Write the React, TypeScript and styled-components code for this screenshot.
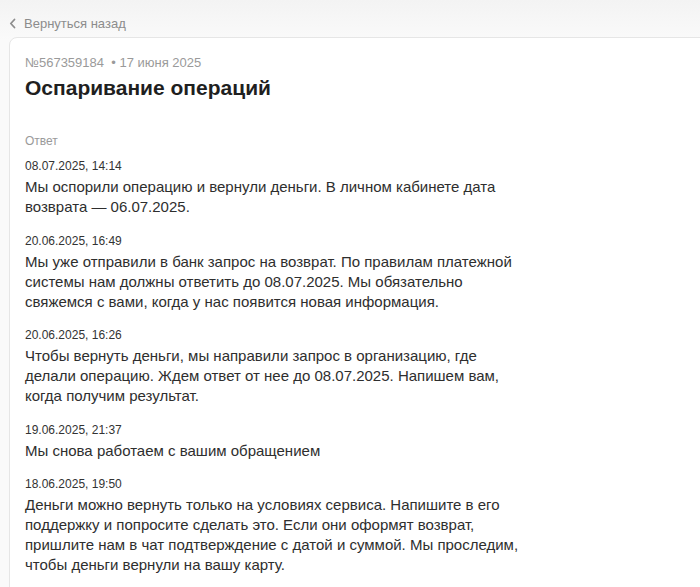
import React from "react";
import styled, { createGlobalStyle } from "styled-components";

const GlobalStyle = createGlobalStyle`
  html, body {
    margin: 0;
    padding: 0;
    background: #fafafa;
    font-family: "Liberation Sans", Arial, sans-serif;
  }
`;

const Page = styled.div`
  min-height: 587px;
  background: linear-gradient(#f3f3f3 0, #fafafa 40px, #fafafa 100%);
  padding: 13px 0 0 9px;
  box-sizing: border-box;
  overflow: hidden;
`;

const BackLink = styled.a`
  display: flex;
  align-items: center;
  gap: 8px;
  height: 20px;
  font-size: 13px;
  color: #8c8c8c;
  text-decoration: none;
  cursor: pointer;
`;

const Card = styled.div`
  margin-top: 4px;
  margin-right: -20px;
  background: #ffffff;
  border: 1px solid #e6e6e6;
  border-radius: 8px;
  padding: 17px 15px 40px;
  min-height: 600px;
`;

const Meta = styled.div`
  font-size: 13px;
  line-height: 16px;
  color: #9a9a9a;
`;

const Title = styled.h1`
  margin: 3px 0 0;
  font-size: 21px;
  line-height: 28px;
  font-weight: 700;
  color: #1f1f1f;
`;

const SectionLabel = styled.div`
  margin-top: 31px;
  font-size: 12px;
  line-height: 16px;
  color: #9a9a9a;
`;

const Messages = styled.div`
  display: flex;
  flex-direction: column;
  gap: 15.5px;
  margin-top: 9px;
  max-width: 500px;
`;

const Message = styled.div`
  display: flex;
  flex-direction: column;
  gap: 2px;
`;

const Stamp = styled.div`
  font-size: 12px;
  line-height: 17px;
  color: #333333;
`;

const Body = styled.div`
  font-size: 15px;
  line-height: 20px;
  color: #2e2e2e;
`;

const messages = [
  {
    at: "08.07.2025, 14:14",
    text: "Мы оспорили операцию и вернули деньги. В личном кабинете дата возврата — 06.07.2025.",
  },
  {
    at: "20.06.2025, 16:49",
    text: "Мы уже отправили в банк запрос на возврат. По правилам платежной системы нам должны ответить до 08.07.2025. Мы обязательно свяжемся с вами, когда у нас появится новая информация.",
  },
  {
    at: "20.06.2025, 16:26",
    text: "Чтобы вернуть деньги, мы направили запрос в организацию, где делали операцию. Ждем ответ от нее до 08.07.2025. Напишем вам, когда получим результат.",
  },
  {
    at: "19.06.2025, 21:37",
    text: "Мы снова работаем с вашим обращением",
  },
  {
    at: "18.06.2025, 19:50",
    text: "Деньги можно вернуть только на условиях сервиса. Напишите в его поддержку и попросите сделать это. Если они оформят возврат, пришлите нам в чат подтверждение с датой и суммой. Мы проследим, чтобы деньги вернули на вашу карту.",
  },
];

export default function App() {
  return (
    <>
      <GlobalStyle />
      <Page>
        <BackLink>
          <svg width="7" height="11" viewBox="0 0 7 11" fill="none">
            <path
              d="M5.5 1.5L1.8 5.5l3.7 4"
              stroke="#8c8c8c"
              strokeWidth="1.8"
              strokeLinecap="round"
              strokeLinejoin="round"
            />
          </svg>
          Вернуться назад
        </BackLink>
        <Card>
          <Meta>№567359184 &nbsp;•&nbsp;17 июня 2025</Meta>
          <Title>Оспаривание операций</Title>
          <SectionLabel>Ответ</SectionLabel>
          <Messages>
            {messages.map((m, i) => (
              <Message key={i}>
                <Stamp>{m.at}</Stamp>
                <Body>{m.text}</Body>
              </Message>
            ))}
          </Messages>
        </Card>
      </Page>
    </>
  );
}
